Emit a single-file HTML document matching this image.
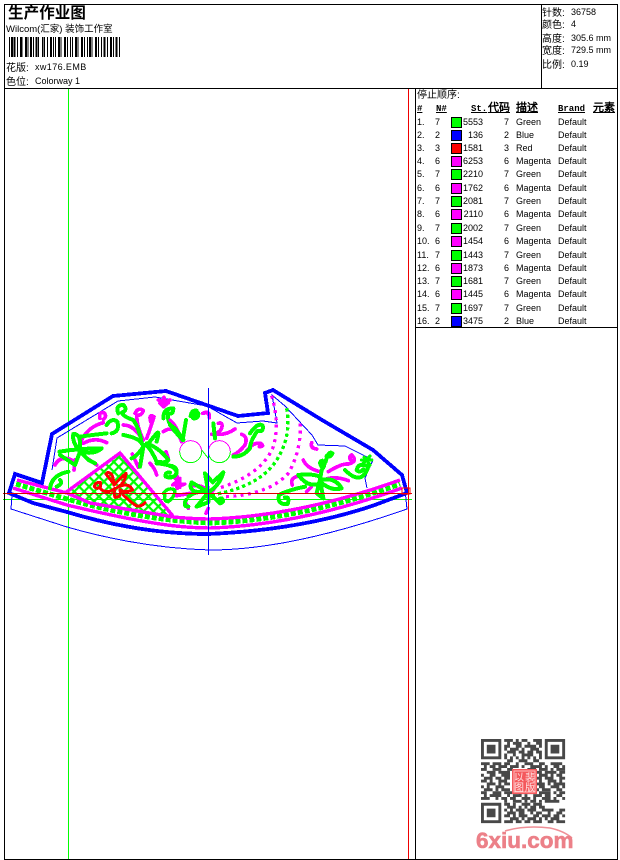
<!DOCTYPE html>
<html lang="zh">
<head>
<meta charset="utf-8">
<title>生产作业图</title>
<style>
html,body{margin:0;padding:0;background:#fff}
body{position:relative;width:620px;height:860px;overflow:hidden;font:9px/12px "Liberation Sans","WenQuanYi Zen Hei","Noto Sans CJK SC",sans-serif;color:#000}
.t{position:absolute;white-space:nowrap}
.cj{font-size:10px}
.v{font-size:9px}
.h{position:absolute;top:103px;font:bold 9px/12px "Liberation Mono","WenQuanYi Zen Hei",monospace;text-decoration:underline;white-space:nowrap}
.r{position:absolute;left:0;width:620px;height:12px}
.r span{position:absolute;top:0;white-space:nowrap}
.a{left:417px}.b{left:435px}
.c{left:451px;top:1px!important;width:9px;height:9px;border:1px solid #000}
.d{left:452px;width:31px;text-align:right}
.e{left:495px;width:14px;text-align:right}
.f{left:516px}.g{left:558px}
.G{background:#0f0}.B{background:#00f}.R{background:#f00}.M{background:#f0f}
svg{position:absolute;left:0;top:0}
</style>
</head>
<body>
<svg width="620" height="860" viewBox="0 0 620 860" shape-rendering="crispEdges" fill="none">
<defs>
<pattern id="lat" width="7" height="7" patternUnits="userSpaceOnUse" patternTransform="rotate(45)">
<path d="M0 0H7M0 0V7" stroke="#0f0" stroke-width="4.4" shape-rendering="geometricPrecision"/>
</pattern>
</defs>

<!-- guides behind -->
<path d="M68.5 89V859" stroke="#0f0"/>
<path d="M3 499.5H412" stroke="#0f0"/>

<!-- thin blue outlines -->
<g stroke="#00f" stroke-width="1">
<path d="M12 495L11 509L67 527Q140 548 210 550Q290 550 407 509L405 490"/>
<path d="M52 470L57 438L118 401L155 397L207 406L237 423L263 421L277 423L272 395L285 406L298 420L312 435L318 445L345 446L373 460L365 478L367 488"/>
</g>

<!-- triangle lattice and band lattice -->
<path d="M120 453L65 494L90 502L172 516Z" fill="url(#lat)"/>
<path d="M16 484L67 499Q140 520 210 523Q300 520 400 484" stroke="#0f0" stroke-width="5" stroke-dasharray="5 2"/>

<!-- magenta bands -->
<g stroke="#f0f" stroke-width="3.4">
<path d="M17 480L67 493L90 503L173 517Q195 519 210 519Q300 516 400 480"/>
<path d="M13 488L67 505Q130 520 167 525Q190 528 210 528Q300 525 402 488"/>
<path d="M65 493L120 453L173 516"/>
</g>

<!-- thick blue outline -->
<path d="M9 493L15 474L42 483L52 434L113 396L166 391L238 416L268 413L265 393L273 390L322 420L373 450L402 475L407 493L372 506Q300 530 208 534Q140 534 67 512L33 503Z" stroke="#00f" stroke-width="3.8"/>

<!-- left & mid flowers (zoom coords) -->
<g transform="translate(0,380) scale(.33333)" stroke-linecap="round" stroke-linejoin="round">
<g stroke="#f0f" stroke-width="11">
<path d="M245 180Q265 140 310 128"/>
<path d="M300 115Q295 95 312 98Q322 108 310 118"/>
<path d="M250 190Q285 170 320 188"/>
<path d="M215 240Q180 225 165 255"/>
<path d="M225 240L222 270"/>
<path d="M262 235L290 255"/>
<path d="M405 100Q415 80 430 92Q425 108 410 105Q410 140 430 180"/>
<path d="M452 125Q445 100 462 110Q455 135 440 175"/>
<path d="M370 135Q400 135 425 175"/>
<path d="M397 222L415 262"/>
<path d="M450 250Q465 265 470 285"/>
<path d="M498 215L505 235"/>
<path d="M490 155Q525 130 545 185"/>
<path d="M612 100Q622 92 628 108"/>
<path d="M475 60L505 68L490 80L480 70L510 60M492 52V80" stroke-width="11"/>
<path d="M540 300L525 312L555 312L530 322M540 295V322" stroke-width="10"/>
</g>
<g stroke="#0f0" stroke-width="12">
<path d="M320 135Q335 112 352 125Q360 155 335 160"/>
<path d="M240 215Q245 160 220 162Q215 185 240 215"/>
<path d="M178 215Q240 205 305 205Q285 225 240 215"/>
<path d="M240 215L225 255L180 225"/>
<path d="M240 215L265 240L285 250"/>
<path d="M240 170Q275 165 320 160"/>
<path d="M150 325Q155 285 205 275"/>
<path d="M170 320Q190 310 180 300"/>
<path d="M355 100Q345 75 370 75Q385 90 365 98Q370 110 400 120Q420 150 425 190"/>
<path d="M370 165Q425 175 430 200Q410 230 395 235"/>
<path d="M430 195Q445 190 470 245Q500 250 505 240Q480 205 440 190"/>
<path d="M430 200L420 260"/>
<path d="M470 160L445 190M470 160Q480 150 470 185"/>
<path d="M470 250Q530 255 530 280Q520 298 497 290Q495 275 510 278"/>
<path d="M490 115Q490 85 520 85Q520 105 505 100Q495 130 550 180"/>
<path d="M572 108Q575 90 590 92Q595 108 578 112"/>
<path d="M490 340Q505 320 525 330Q525 350 505 365Q490 365 495 345" stroke-width="10"/>
</g>
</g>

<!-- red flower -->
<g transform="translate(0,380) scale(.33333)" stroke="#f00" stroke-width="9" stroke-linecap="round" stroke-linejoin="round">
<path d="M322 278Q340 275 342 315Q360 295 378 280Q375 310 352 322Q385 305 398 330Q375 340 360 330Q365 352 345 352Q340 340 345 325Q320 345 300 325L302 308Q285 305 283 320Q292 330 302 320"/>
<path d="M370 345Q390 365 410 378Q425 380 435 368"/>
<path d="M318 282L340 310"/>
</g>

<!-- lower flower, circles, upper middle curls (zoom 10 coords) -->
<g transform="translate(170,395) scale(.33333)" stroke-linecap="round" stroke-linejoin="round">
<path d="M29 170A33 33 0 0 1 95 170" stroke="#f0f" stroke-width="3"/>
<path d="M29 170A33 33 0 0 0 95 170" stroke="#0f0" stroke-width="3"/>
<path d="M115 170A33 33 0 0 1 181 170" stroke="#f0f" stroke-width="3"/>
<path d="M115 170A33 33 0 0 0 181 170" stroke="#0f0" stroke-width="3"/>
<path d="M95 165L115 190" stroke="#0f0" stroke-width="3"/>
<g stroke="#f0f" stroke-width="11">
<path d="M98 55Q120 45 118 68"/>
<path d="M145 85Q160 80 155 100Q148 115 125 118"/>
<path d="M195 102Q170 120 140 118"/>
<path d="M0 75Q20 90 33 130" stroke-width="9"/>
<path d="M215 118Q235 125 225 150Q210 170 190 180"/>
<path d="M228 170Q250 140 272 145Q285 155 268 155"/>
<path d="M70 272Q100 270 115 290M150 255L125 292"/>
<path d="M60 295L20 302M45 320L55 340"/>
<path d="M115 340L108 355"/>
<path d="M15 250L35 270L8 270L30 250M22 245V280" stroke-width="10"/>
</g>
<g stroke="#0f0" stroke-width="12">
<path d="M65 60Q75 42 85 55Q85 72 70 70"/>
<path d="M48 75L38 135"/>
<path d="M0 90Q20 100 35 130"/>
<path d="M130 85L135 130"/>
<path d="M240 115Q265 80 278 92Q282 112 262 108Q240 140 240 160Q220 185 190 185"/>
<path d="M0 212Q22 215 20 235Q10 250 0 245"/>
<path d="M115 292L105 235L128 262L160 232Q150 270 115 292"/>
<path d="M115 292L65 262Q55 280 75 290L115 292L80 335L115 322Z"/>
<path d="M115 292L150 325Q165 322 155 310Q145 310 148 322"/>
<path d="M48 315Q38 335 55 335"/>
<path d="M115 292Q80 285 55 305"/>
</g>
</g>

<!-- beads, right flower (zoom 5 coords) -->
<g transform="translate(205,380) scale(.33333)" stroke-linejoin="round" stroke-linecap="round">
<g stroke-linecap="butt" stroke-width="10">
<path d="M200 47Q225 130 205 200Q170 285 40 325" stroke="#f0f" stroke-dasharray="9 13"/>
<path d="M245 85Q260 170 215 240Q165 320 20 345" stroke="#0f0" stroke-dasharray="10 9"/>
<path d="M285 130Q290 210 250 280Q190 345 60 350" stroke="#f0f" stroke-dasharray="9 13"/>
</g>
<g stroke="#f0f" stroke-width="11">
<path d="M295 240Q305 265 345 275"/>
<path d="M370 275Q410 250 430 252Q460 245 440 225Q430 230 437 240"/>
<path d="M320 188Q315 205 335 207"/>
<path d="M275 290Q255 295 262 315"/>
<path d="M370 295Q400 290 430 302"/>
<path d="M318 322L305 335"/>
</g>
<g stroke="#0f0" stroke-width="12">
<path d="M280 285Q320 280 345 290L345 310Q310 325 280 285"/>
<path d="M345 300Q390 290 410 325Q380 335 345 305"/>
<path d="M345 300L355 355L335 340Z"/>
<path d="M350 260Q340 245 352 242Q365 250 350 270L345 300"/>
<path d="M362 245Q370 210 382 220Q375 235 365 228"/>
<path d="M420 270Q470 320 490 260Q460 245 455 270Q465 280 475 268"/>
<path d="M300 320Q250 330 222 345Q215 375 248 372Q255 350 240 352"/>
<path d="M478 232L495 255M495 228L475 250M470 240H500" stroke-width="10"/>
</g>
</g>

<!-- guides on top -->
<path d="M208.5 388V555" stroke="#00f"/>
<path d="M3 493.5H412" stroke="#e00000" stroke-width="1"/>
<path d="M408.5 89V859" stroke="#f00000" stroke-width="1"/>
<path d="M402 488h8v6h-8z" stroke="#f00"/>

<!-- frame -->
<g stroke="#000">
<path d="M4.5 4.5H617.5V859.5H4.5Z"/>
<path d="M4 88.5H618"/>
<path d="M541.5 4V88"/>
<path d="M415.5 88V859"/>
<path d="M415 327.5H618"/>
</g>

<!-- barcode -->
<path stroke="#000" d="M9.5 37v20M11.5 37v20M14 37v20M17.5 37v20M20.5 37v20M22 37v20M25.5 37v20M28 37v20M30.5 37v20M33.5 37v20M36 37v20M38.5 37v20M42.5 37v20M44.5 37v20M47.5 37v20M50.5 37v20M53.5 37v20M55.5 37v20M58.5 37v20M61 37v20M64.5 37v20M67.5 37v20M70.5 37v20M72.5 37v20M75.5 37v20M78 37v20M81.5 37v20M84.5 37v20M87.5 37v20M89.5 37v20M92 37v20M95.5 37v20M98.5 37v20M101.5 37v20M104 37v20M107.5 37v20M110.5 37v20M113.5 37v20M116 37v20M119.5 37v20"/>
<path stroke="#000" d="M12.5 37v20M15 37v20M21 37v20M26.5 37v20M31.5 37v20M37 37v20M43 37v20M51.5 37v20M59.5 37v20M65.5 37v20M76.5 37v20M82.5 37v20M90.5 37v20M96.5 37v20M105 37v20M111.5 37v20M117 37v20"/>

<!-- QR -->
<g transform="translate(481,739) scale(2.9)" stroke="#484848" stroke-width="1" shape-rendering="geometricPrecision">
<path d="M.5 .5h6v6h-6zM22.5 .5h6v6h-6zM.5 22.5h6v6h-6z"/>
<path d="M2 2h3v3h-3zM24 2h3v3h-3zM2 24h3v3h-3z" fill="#484848" stroke="none"/>
<path d="M8 .5h3M12 .5h1M14 .5h2M18 .5h3M9 1.5h1M11 1.5h3M16 1.5h1M19 1.5h2M8 2.5h2M12 2.5h2M15 2.5h4M20 2.5h1M8 3.5h1M10 3.5h3M14 3.5h1M17 3.5h3M9 4.5h3M13 4.5h2M16 4.5h2M19 4.5h2M8 5.5h1M11 5.5h1M14 5.5h4M20 5.5h1M8 6.5h1M10 6.5h1M12 6.5h1M14 6.5h1M16 6.5h1M18 6.5h1M20 6.5h1M9 7.5h2M13 7.5h3M18 7.5h2"/>
<path d="M0 8.5h3M4 8.5h3M8 8.5h2M12 8.5h1M15 8.5h3M20 8.5h2M24 8.5h4M1 9.5h1M3 9.5h2M6 9.5h3M10 9.5h3M14 9.5h1M17 9.5h4M22 9.5h1M25 9.5h2M28 9.5h1M0 10.5h2M4 10.5h3M9 10.5h2M16 10.5h3M20 10.5h3M24 10.5h1M26 10.5h3"/>
<path d="M2 11.5h3M6 11.5h4M19 11.5h2M22 11.5h4M27 11.5h2M0 12.5h1M3 12.5h2M7 12.5h3M20 12.5h3M24 12.5h1M26 12.5h2M1 13.5h3M5 13.5h2M8 13.5h2M19 13.5h2M22 13.5h3M27 13.5h2M0 14.5h2M3 14.5h1M6 14.5h3M20 14.5h1M23 14.5h3M27 14.5h1M2 15.5h3M6 15.5h1M8 15.5h2M19 15.5h3M23 15.5h1M25 15.5h4M0 16.5h1M2 16.5h1M5 16.5h3M20 16.5h2M24 16.5h3M28 16.5h1M1 17.5h3M5 17.5h1M7 17.5h3M19 17.5h1M21 17.5h3M26 17.5h2"/>
<path d="M0 18.5h2M4 18.5h3M8 18.5h3M13 18.5h2M16 18.5h2M20 18.5h4M25 18.5h1M27 18.5h2M1 19.5h1M3 19.5h4M9 19.5h1M11 19.5h3M15 19.5h1M18 19.5h3M22 19.5h2M26 19.5h2M0 20.5h3M5 20.5h1M7 20.5h2M10 20.5h2M14 20.5h3M18 20.5h1M21 20.5h3M25 20.5h1M28 20.5h1M8 21.5h1M11 21.5h3M15 21.5h1M17 21.5h2M20 21.5h1M22 21.5h5"/>
<path d="M8 22.5h2M11 22.5h1M14 22.5h3M18 22.5h3M9 23.5h3M13 23.5h1M15 23.5h1M17 23.5h2M20 23.5h2M8 24.5h1M10 24.5h1M12 24.5h3M16 24.5h3M21 24.5h4M27 24.5h2M9 25.5h3M13 25.5h2M17 25.5h1M19 25.5h2M23 25.5h1M26 25.5h2M8 26.5h2M11 26.5h1M13 26.5h3M18 26.5h2M21 26.5h3M25 26.5h2M28 26.5h1M10 27.5h3M14 27.5h1M16 27.5h3M20 27.5h1M22 27.5h1M24 27.5h3M8 28.5h3M12 28.5h2M15 28.5h2M18 28.5h3M23 28.5h2M26 28.5h3"/>
</g>
<rect x="512" y="769" width="25" height="25" fill="#f4585c" shape-rendering="geometricPrecision"/>
<rect x="514" y="771" width="21" height="21" fill="none" stroke="#fbb" stroke-width="1" shape-rendering="geometricPrecision"/>
<g font-family="'WenQuanYi Zen Hei','Noto Sans CJK SC',sans-serif" font-size="10" fill="#ffe4e4" text-anchor="middle" shape-rendering="geometricPrecision">
<text x="519" y="781">以</text><text x="530" y="781">裴</text>
<text x="519" y="791">图</text><text x="530" y="791">版</text>
</g>

<!-- 6xiu logo -->
<path d="M505 831Q525 825 550 828Q564 831 572 838" stroke="#ef8f96" stroke-width="1.6" shape-rendering="geometricPrecision"/>
<text x="476" y="848" font-family="'Liberation Sans',sans-serif" font-weight="bold" font-size="22.5" fill="#ec8088" stroke="#ec8088" stroke-width=".6" shape-rendering="geometricPrecision">6xiu.com</text>
</svg>

<div class="t" style="left:8px;top:3px;font:bold 15.5px/18px 'WenQuanYi Zen Hei','Noto Sans CJK SC',sans-serif;letter-spacing:.1px">生产作业图</div>
<div class="t" style="left:6px;top:24px;font-size:9.5px">Wilcom(汇家) 装饰工作室</div>
<div class="t cj" style="left:6px;top:63px">花版:</div><div class="t v" style="left:35px;top:61px;letter-spacing:.4px">xw176.EMB</div>
<div class="t cj" style="left:6px;top:77px">色位:</div><div class="t v" style="left:35px;top:75px">Colorway 1</div>

<div class="t cj" style="left:542px;top:8px">针数:</div><div class="t v" style="left:571px;top:6px">36758</div>
<div class="t cj" style="left:542px;top:20px">颜色:</div><div class="t v" style="left:571px;top:18px">4</div>
<div class="t cj" style="left:542px;top:34px">高度:</div><div class="t v" style="left:571px;top:32px">305.6 mm</div>
<div class="t cj" style="left:542px;top:46px">宽度:</div><div class="t v" style="left:571px;top:44px">729.5 mm</div>
<div class="t cj" style="left:542px;top:60px">比例:</div><div class="t v" style="left:571px;top:58px">0.19</div>

<div class="t cj" style="left:417px;top:90px">停止顺序:</div>
<div class="h" style="left:417px">#</div>
<div class="h" style="left:436px">N#</div>
<div class="h" style="left:471px">St.</div>
<div class="h" style="left:488px;font-size:11px">代码</div>
<div class="h" style="left:516px;font-size:11px">描述</div>
<div class="h" style="left:558px">Brand</div>
<div class="h" style="left:593px;font-size:11px">元素</div>

<div class="r" style="top:116px"><span class="a">1.</span><span class="b">7</span><span class="c G"></span><span class="d">5553</span><span class="e">7</span><span class="f">Green</span><span class="g">Default</span></div>
<div class="r" style="top:129px"><span class="a">2.</span><span class="b">2</span><span class="c B"></span><span class="d">136</span><span class="e">2</span><span class="f">Blue</span><span class="g">Default</span></div>
<div class="r" style="top:142px"><span class="a">3.</span><span class="b">3</span><span class="c R"></span><span class="d">1581</span><span class="e">3</span><span class="f">Red</span><span class="g">Default</span></div>
<div class="r" style="top:155px"><span class="a">4.</span><span class="b">6</span><span class="c M"></span><span class="d">6253</span><span class="e">6</span><span class="f">Magenta</span><span class="g">Default</span></div>
<div class="r" style="top:168px"><span class="a">5.</span><span class="b">7</span><span class="c G"></span><span class="d">2210</span><span class="e">7</span><span class="f">Green</span><span class="g">Default</span></div>
<div class="r" style="top:182px"><span class="a">6.</span><span class="b">6</span><span class="c M"></span><span class="d">1762</span><span class="e">6</span><span class="f">Magenta</span><span class="g">Default</span></div>
<div class="r" style="top:195px"><span class="a">7.</span><span class="b">7</span><span class="c G"></span><span class="d">2081</span><span class="e">7</span><span class="f">Green</span><span class="g">Default</span></div>
<div class="r" style="top:208px"><span class="a">8.</span><span class="b">6</span><span class="c M"></span><span class="d">2110</span><span class="e">6</span><span class="f">Magenta</span><span class="g">Default</span></div>
<div class="r" style="top:222px"><span class="a">9.</span><span class="b">7</span><span class="c G"></span><span class="d">2002</span><span class="e">7</span><span class="f">Green</span><span class="g">Default</span></div>
<div class="r" style="top:235px"><span class="a">10.</span><span class="b">6</span><span class="c M"></span><span class="d">1454</span><span class="e">6</span><span class="f">Magenta</span><span class="g">Default</span></div>
<div class="r" style="top:249px"><span class="a">11.</span><span class="b">7</span><span class="c G"></span><span class="d">1443</span><span class="e">7</span><span class="f">Green</span><span class="g">Default</span></div>
<div class="r" style="top:262px"><span class="a">12.</span><span class="b">6</span><span class="c M"></span><span class="d">1873</span><span class="e">6</span><span class="f">Magenta</span><span class="g">Default</span></div>
<div class="r" style="top:275px"><span class="a">13.</span><span class="b">7</span><span class="c G"></span><span class="d">1681</span><span class="e">7</span><span class="f">Green</span><span class="g">Default</span></div>
<div class="r" style="top:288px"><span class="a">14.</span><span class="b">6</span><span class="c M"></span><span class="d">1445</span><span class="e">6</span><span class="f">Magenta</span><span class="g">Default</span></div>
<div class="r" style="top:302px"><span class="a">15.</span><span class="b">7</span><span class="c G"></span><span class="d">1697</span><span class="e">7</span><span class="f">Green</span><span class="g">Default</span></div>
<div class="r" style="top:315px"><span class="a">16.</span><span class="b">2</span><span class="c B"></span><span class="d">3475</span><span class="e">2</span><span class="f">Blue</span><span class="g">Default</span></div>
</body>
</html>
